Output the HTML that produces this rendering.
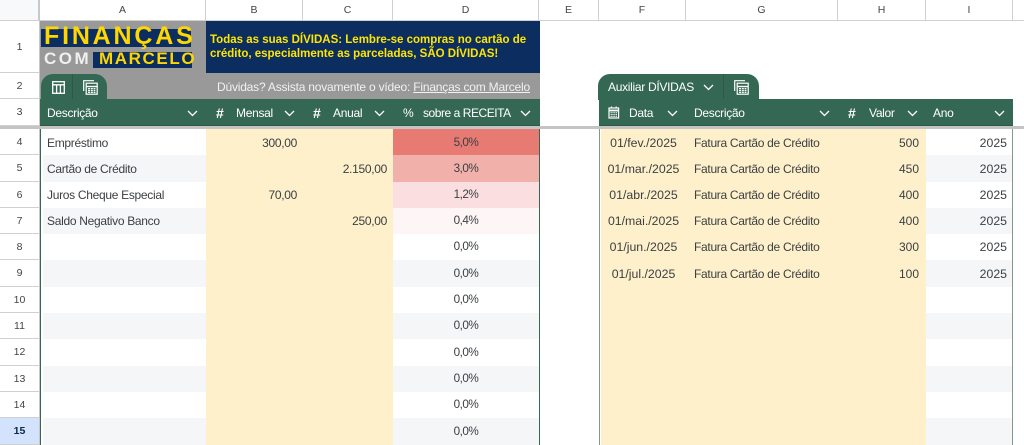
<!DOCTYPE html>
<html><head><meta charset="utf-8">
<style>
html,body{margin:0;padding:0;background:#fff;}
#p{position:relative;width:1024px;height:445px;overflow:hidden;font-family:"Liberation Sans",sans-serif;font-size:12px;letter-spacing:-.3px;color:#3c4043;background:#fff;}
#p div{position:absolute;box-sizing:border-box;white-space:nowrap;}
.ch{top:0;height:20px;line-height:20px;text-align:center;font-size:10.5px;letter-spacing:0;color:#444;border-right:1px solid #d0d0d0;}
.rh{left:0;width:40px;text-align:center;font-size:10.5px;letter-spacing:0;color:#444;border-bottom:1px solid #d0d0d0;padding-right:1px;}
.g{top:99px;height:27px;background:#356854;}
.h{top:99px;height:27px;line-height:28px;color:#fff;font-size:12px;}
.hs{font-size:14px;font-weight:bold;letter-spacing:0;}
.t{line-height:26px;height:26px;}
.r{text-align:right;}
.c{text-align:center;}
.p{font-size:11.7px;letter-spacing:-.5px;}
.d{font-size:12.3px;letter-spacing:0;}
.n{font-size:12px;letter-spacing:0;}
svg{position:absolute;overflow:visible;}
</style></head><body><div id="p">

<div style="left:0;top:0;width:40px;height:20px;background:#f8f9fa;border-right:2px solid #c8c8c8"></div>
<div style="left:0;top:20px;width:1024px;height:1px;background:#d0d0d0"></div>
<div class="ch" style="left:40px;width:166px">A</div>
<div class="ch" style="left:206px;width:97px">B</div>
<div class="ch" style="left:303px;width:90px">C</div>
<div class="ch" style="left:393px;width:146px">D</div>
<div class="ch" style="left:539px;width:60px">E</div>
<div class="ch" style="left:599px;width:87px">F</div>
<div class="ch" style="left:686px;width:152px">G</div>
<div class="ch" style="left:838px;width:88px">H</div>
<div class="ch" style="left:926px;width:87px">I</div>

<div class="rh" style="top:21px;height:52px;line-height:52px">1</div>
<div class="rh" style="top:73px;height:26px;line-height:26px">2</div>
<div class="rh" style="top:99px;height:27px;line-height:27px">3</div>
<div class="rh" style="top:129px;height:26px;line-height:26px">4</div>
<div class="rh" style="top:155px;height:27px;line-height:27px">5</div>
<div class="rh" style="top:182px;height:26px;line-height:26px">6</div>
<div class="rh" style="top:208px;height:26px;line-height:26px">7</div>
<div class="rh" style="top:234px;height:26px;line-height:26px">8</div>
<div class="rh" style="top:260px;height:27px;line-height:27px">9</div>
<div class="rh" style="top:287px;height:26px;line-height:26px">10</div>
<div class="rh" style="top:313px;height:26px;line-height:26px">11</div>
<div class="rh" style="top:339px;height:27px;line-height:27px">12</div>
<div class="rh" style="top:366px;height:26px;line-height:26px">13</div>
<div class="rh" style="top:392px;height:26px;line-height:26px">14</div>
<div class="rh" style="top:418px;height:27px;line-height:27px;background:#d3e3fd;font-weight:bold;color:#0b2a4a">15</div>
<div style="left:39px;top:20px;width:1px;height:425px;background:#c8c8c8"></div>

<!-- top grey band -->
<div style="left:40px;top:21px;width:500px;height:78px;background:#999999"></div>
<div style="left:206px;top:21px;width:334px;height:52px;background:#0c2d60"></div>
<div style="left:41px;top:29px;width:150px;height:18px;background:#0c2d60"></div>
<div style="left:93px;top:52px;width:99px;height:16px;background:#0c2d60"></div>
<div style="left:44px;top:20px;height:32px;line-height:32px;font-size:25px;font-weight:bold;letter-spacing:2.8px;color:#ffd600">FINANÇAS</div>
<div style="left:44px;top:48px;height:21px;line-height:21px;font-size:17px;font-weight:bold;letter-spacing:2.5px;color:#f0f0f0">COM</div>
<div style="left:99px;top:48px;height:21px;line-height:21px;font-size:17px;font-weight:bold;letter-spacing:1.6px;color:#ffd600">MARCELO</div>
<div style="left:210px;top:33px;height:15px;line-height:15px;font-size:11.5px;letter-spacing:0;font-weight:bold;color:#ffe600">Todas as suas DÍVIDAS: Lembre-se compras no cartão de</div>
<div style="left:210px;top:47px;height:15px;line-height:15px;font-size:11.5px;letter-spacing:0;font-weight:bold;color:#ffe600">crédito, especialmente as parceladas, SÃO DÍVIDAS!</div>
<div style="left:217px;top:73px;height:26px;line-height:28px;font-size:12px;letter-spacing:-.2px;color:#f1f1f1">Dúvidas? Assista novamente o vídeo: <span style="text-decoration:underline">Finanças com Marcelo</span></div>

<!-- tabs left -->
<div style="left:41px;top:74px;width:66px;height:25px;background:#356854;border-radius:12px 12px 0 0"></div>
<div style="left:72px;top:74px;width:1px;height:25px;background:#2b5a47"></div>
<svg style="left:52px;top:81px" width="13" height="13" viewBox="0 0 13 13" fill="none" stroke="#fff" stroke-width="1.3"><rect x=".7" y=".7" width="11.6" height="11.6"/><path d="M.7 3.8H12.3M4.6 3.8V12.3M8.4 3.8V12.3"/></svg>
<svg style="left:83px;top:80px" width="15" height="15" viewBox="0 0 15 15" fill="none" stroke="#fff" stroke-width="1.2"><path d="M.7 11V.7H11"/><rect x="3.2" y="3.2" width="11" height="11" fill="#356854"/><path d="M3.2 6.500H14.200" stroke-width="1.4"/><path d="M5 8.600h7.400M5 10.500h7.400M5 12.400h7.400" stroke-width="1.2" stroke-dasharray="2 .8"/></svg>

<!-- tabs right -->
<div style="left:598px;top:74px;width:161px;height:26px;background:#356854;border-radius:12px 12px 0 0"></div>
<div style="left:723px;top:74px;width:1px;height:25px;background:#2b5a47"></div>
<div style="left:608px;top:74px;height:26px;line-height:27px;color:#fff;font-size:12px">Auxiliar DÍVIDAS</div>
<svg style="left:734px;top:80px" width="15" height="15" viewBox="0 0 15 15" fill="none" stroke="#fff" stroke-width="1.2"><path d="M.7 11V.7H11"/><rect x="3.2" y="3.2" width="11" height="11" fill="#356854"/><path d="M3.2 6.500H14.200" stroke-width="1.4"/><path d="M5 8.600h7.400M5 10.500h7.400M5 12.400h7.400" stroke-width="1.2" stroke-dasharray="2 .8"/></svg>

<!-- header bars -->
<div class="g" style="left:40px;width:500px;border-bottom:1px solid #2b5a47"></div>
<div class="g" style="left:599px;width:414px;border-bottom:1px solid #2b5a47"></div>

<div class="h" style="left:47px">Descrição</div>
<div class="h hs" style="left:216px">#</div>
<div class="h" style="left:236px">Mensal</div>
<div class="h hs" style="left:313px">#</div>
<div class="h" style="left:333px">Anual</div>
<div class="h" style="left:403px;letter-spacing:0">%</div>
<div class="h" style="left:423px;letter-spacing:-.45px">sobre a RECEITA</div>
<svg style="left:608px;top:106px" width="12" height="13" viewBox="0 0 12 13" fill="none" stroke="#fff"><rect x="1" y="2" width="9.600" height="10" fill="none" stroke-width="1.2"/><path d="M1 4.500h9.600" stroke-width="1.8"/><path d="M3.500 .5v2M8.200 .5v2" stroke-width="1.2"/><path d="M2.600 6.800h6.400M2.600 8.600h6.400M2.600 10.400h6.400" stroke-width="1" stroke-dasharray="1.2 .6"/></svg>
<div class="h" style="left:629px">Data</div>
<div class="h" style="left:694px">Descrição</div>
<div class="h hs" style="left:848px">#</div>
<div class="h" style="left:869px">Valor</div>
<div class="h" style="left:933px">Ano</div>

<!-- chevrons -->
<svg style="left:0;top:0" width="1024" height="130" fill="none" stroke="#fff" stroke-width="1.3">
<path d="M188 111l4.500 4.500 4.500-4.500"/>
<path d="M285 111l4.500 4.500 4.500-4.500"/>
<path d="M375 111l4.500 4.500 4.500-4.500"/>
<path d="M521 111l4.500 4.500 4.500-4.500"/>
<path d="M668 111l4.500 4.500 4.500-4.500"/>
<path d="M820 111l4.500 4.500 4.500-4.500"/>
<path d="M908 111l4.500 4.500 4.500-4.500"/>
<path d="M995 111l4.500 4.500 4.500-4.500"/>
<path d="M704 85l4.500 4.500 4.500-4.500"/>
</svg>

<!-- banded rows -->
<div style="left:43px;top:155px;width:350px;height:27px;background:#f4f6f8"></div>
<div style="left:43px;top:208px;width:350px;height:26px;background:#f4f6f8"></div>
<div style="left:43px;top:260px;width:350px;height:27px;background:#f4f6f8"></div>
<div style="left:43px;top:313px;width:350px;height:26px;background:#f4f6f8"></div>
<div style="left:43px;top:366px;width:350px;height:26px;background:#f4f6f8"></div>
<div style="left:43px;top:418px;width:350px;height:27px;background:#f4f6f8"></div>
<div style="left:393px;top:260px;width:146px;height:27px;background:#f4f6f8"></div>
<div style="left:393px;top:313px;width:146px;height:26px;background:#f4f6f8"></div>
<div style="left:393px;top:366px;width:146px;height:26px;background:#f4f6f8"></div>
<div style="left:393px;top:418px;width:146px;height:27px;background:#f4f6f8"></div>
<div style="left:926px;top:155px;width:87px;height:27px;background:#f4f6f8"></div>
<div style="left:926px;top:208px;width:87px;height:26px;background:#f4f6f8"></div>
<div style="left:926px;top:260px;width:87px;height:27px;background:#f4f6f8"></div>
<div style="left:926px;top:313px;width:87px;height:26px;background:#f4f6f8"></div>
<div style="left:926px;top:366px;width:87px;height:26px;background:#f4f6f8"></div>
<div style="left:926px;top:418px;width:87px;height:27px;background:#f4f6f8"></div>

<!-- yellow columns -->
<div style="left:206px;top:129px;width:187px;height:316px;background:#fef0cb"></div>
<div style="left:601px;top:129px;width:325px;height:316px;background:#fef0cb"></div>

<!-- heat -->
<div style="left:393px;top:129px;width:146px;height:26px;background:#e77a72"></div>
<div style="left:393px;top:155px;width:146px;height:27px;background:#f1b0aa"></div>
<div style="left:393px;top:182px;width:146px;height:26px;background:#fbdfe0"></div>
<div style="left:393px;top:208px;width:146px;height:26px;background:#fdf5f6"></div>

<!-- borders -->
<div style="left:40px;top:129px;width:1px;height:316px;background:#356854"></div>
<div style="left:539px;top:129px;width:1px;height:316px;background:#356854"></div>
<div style="left:599px;top:129px;width:1px;height:316px;background:#7d9a8d"></div>
<div style="left:1012px;top:129px;width:1px;height:316px;background:#7d9a8d"></div>

<!-- freeze line -->
<div style="left:0;top:126px;width:1024px;height:3px;background:#c4c4c4"></div>

<!-- Column A -->
<div class="t" style="left:47px;top:130px">Empréstimo</div>
<div class="t" style="left:47px;top:156px">Cartão de Crédito</div>
<div class="t" style="left:47px;top:182px">Juros Cheque Especial</div>
<div class="t" style="left:47px;top:208px">Saldo Negativo Banco</div>

<!-- B C -->
<div class="t r" style="left:206px;width:91px;top:130px">300,00</div>
<div class="t r" style="left:206px;width:91px;top:182px">70,00</div>
<div class="t r" style="left:303px;width:84px;top:156px">2.150,00</div>
<div class="t r" style="left:303px;width:84px;top:208px">250,00</div>

<!-- D -->
<div class="t c p" style="left:393px;width:146px;top:130px">5,0%</div>
<div class="t c p" style="left:393px;width:146px;top:156px">3,0%</div>
<div class="t c p" style="left:393px;width:146px;top:182px">1,2%</div>
<div class="t c p" style="left:393px;width:146px;top:208px">0,4%</div>
<div class="t c p" style="left:393px;width:146px;top:234px">0,0%</div>
<div class="t c p" style="left:393px;width:146px;top:261px">0,0%</div>
<div class="t c p" style="left:393px;width:146px;top:287px">0,0%</div>
<div class="t c p" style="left:393px;width:146px;top:313px">0,0%</div>
<div class="t c p" style="left:393px;width:146px;top:340px">0,0%</div>
<div class="t c p" style="left:393px;width:146px;top:366px">0,0%</div>
<div class="t c p" style="left:393px;width:146px;top:392px">0,0%</div>
<div class="t c p" style="left:393px;width:146px;top:419px">0,0%</div>

<!-- F -->
<div class="t c d" style="left:600px;width:87px;top:130px">01/fev./2025</div>
<div class="t c d" style="left:600px;width:87px;top:156px">01/mar./2025</div>
<div class="t c d" style="left:600px;width:87px;top:182px">01/abr./2025</div>
<div class="t c d" style="left:600px;width:87px;top:208px">01/mai./2025</div>
<div class="t c d" style="left:600px;width:87px;top:234px">01/jun./2025</div>
<div class="t c d" style="left:600px;width:87px;top:261px">01/jul./2025</div>

<!-- G -->
<div class="t" style="left:694px;top:130px">Fatura Cartão de Crédito</div>
<div class="t" style="left:694px;top:156px">Fatura Cartão de Crédito</div>
<div class="t" style="left:694px;top:182px">Fatura Cartão de Crédito</div>
<div class="t" style="left:694px;top:208px">Fatura Cartão de Crédito</div>
<div class="t" style="left:694px;top:234px">Fatura Cartão de Crédito</div>
<div class="t" style="left:694px;top:261px">Fatura Cartão de Crédito</div>

<!-- H -->
<div class="t r n" style="left:838px;width:81px;top:130px">500</div>
<div class="t r n" style="left:838px;width:81px;top:156px">450</div>
<div class="t r n" style="left:838px;width:81px;top:182px">400</div>
<div class="t r n" style="left:838px;width:81px;top:208px">400</div>
<div class="t r n" style="left:838px;width:81px;top:234px">300</div>
<div class="t r n" style="left:838px;width:81px;top:261px">100</div>

<!-- I -->
<div class="t r d" style="left:926px;width:81px;top:130px">2025</div>
<div class="t r d" style="left:926px;width:81px;top:156px">2025</div>
<div class="t r d" style="left:926px;width:81px;top:182px">2025</div>
<div class="t r d" style="left:926px;width:81px;top:208px">2025</div>
<div class="t r d" style="left:926px;width:81px;top:234px">2025</div>
<div class="t r d" style="left:926px;width:81px;top:261px">2025</div>

</div></body></html>
